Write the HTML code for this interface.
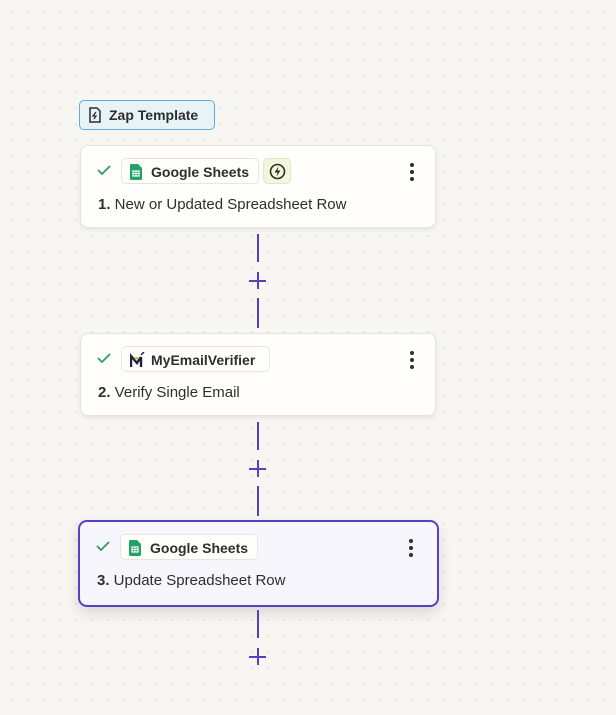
<!DOCTYPE html><html><head><style>
body{margin:0;width:616px;height:715px;overflow:hidden;background-color:#f7f6f2;background-image:radial-gradient(circle,#e2e0d9 0.9px,transparent 1.1px);background-size:16px 16px;background-position:4px 4px;font-family:"Liberation Sans",sans-serif;position:relative;color:#2d2e2e}
.badge{position:absolute;left:79px;top:100px;width:134px;height:28px;border:1px solid #5eaedc;border-radius:5px;background:#e8f3f8;font-weight:bold;font-size:14px;line-height:28px;color:#2d2e2e}
.badge span{position:absolute;left:29px}
.card{position:absolute;left:80px;width:356px;height:83px;background:#fffefb;border:1px solid #e6e4dc;border-radius:8px;box-shadow:0 2px 5px rgba(0,0,0,.08);box-sizing:border-box}
.card.sel{left:78px;width:361px;height:87px;border:2px solid #5b3fc2;background:#f6f6fc;box-shadow:0 6px 14px rgba(0,0,0,.12);border-radius:9px}
.chk{position:absolute;left:16px;top:18px}
.pill{position:absolute;left:40px;top:12px;height:26px;border:1px solid #e7e5dd;border-radius:5px;background:#fffefb;font-size:14px;font-weight:bold;line-height:26px;padding:0 7px 0 29px;color:#2d2e2e;box-sizing:border-box}
.pill svg{position:absolute;left:8px;top:5px}
.title{position:absolute;left:17px;top:50px;font-size:15px;color:#2d2e2e}
.title b{font-weight:bold}
.keb{position:absolute;left:329px;top:17px;width:4px}
.keb i{display:block;width:4px;height:4px;border-radius:2px;background:#2d2e2e;margin-bottom:3px}
.ln{position:absolute;left:257px;width:2px;background:#5b3fc2}
.plus{position:absolute;left:249px;width:18px;height:18px}
.plus:before{content:"";position:absolute;left:0;top:8px;width:17px;height:2px;background:#5b3fc2}
.plus:after{content:"";position:absolute;left:7.5px;top:0;width:2px;height:17px;background:#5b3fc2}
</style></head><body>
<div class="badge"><svg style="position:absolute;left:8px;top:6px" width="14" height="16" viewBox="0 0 14 16" fill="none" stroke="#2d2e2e" stroke-width="1.5"><path d="M2 1h7l3 3v11H2z"/><path d="M8 5l-3 4h3l-2 3" stroke-width="1.3"/></svg><span>Zap Template</span></div>

<div class="card" style="top:145px">
<svg class="chk" width="14" height="12" viewBox="0 0 14 12"><path d="M1 6l4 4 8-8" fill="none" stroke="#2f9e5a" stroke-width="1.8"/></svg>
<div class="pill" style="width:138px"><svg width="12" height="16" viewBox="0 0 12 16"><path d="M0 1.5A1.5 1.5 0 0 1 1.5 0H8l4 4v10.5A1.5 1.5 0 0 1 10.5 16h-9A1.5 1.5 0 0 1 0 14.5z" fill="#21a366"/><rect x="3" y="7" width="6" height="5" fill="none" stroke="#fff" stroke-width="1.2"/><path d="M3 9.5h6M6 7v5" stroke="#fff" stroke-width="1"/></svg>Google Sheets</div>
<div style="position:absolute;left:182px;top:12px;width:28px;height:26px;border:1px solid #e0e8c4;border-radius:5px;background:#f1f8dc;box-sizing:border-box"><svg style="position:absolute;left:5px;top:4px" width="17" height="17" viewBox="0 0 17 17"><circle cx="8.5" cy="8.5" r="7" fill="none" stroke="#2d2e2e" stroke-width="1.6"/><path d="M9.5 3.5L5.5 9.5h3l-1 4 4-6h-3z" fill="#2d2e2e"/></svg></div>
<div class="title"><b>1.</b> New or Updated Spreadsheet Row</div>
<div class="keb"><i></i><i></i><i></i></div></div>

<div class="ln" style="top:234px;height:28px"></div><div class="plus" style="top:272px"></div><div class="ln" style="top:298px;height:30px"></div>

<div class="card" style="top:333px">
<svg class="chk" width="14" height="12" viewBox="0 0 14 12"><path d="M1 6l4 4 8-8" fill="none" stroke="#2f9e5a" stroke-width="1.8"/></svg>
<div class="pill" style="width:149px"><svg width="16" height="16" viewBox="0 0 16 16"><path d="M1 15V4l6 7 4-6" fill="none" stroke="#1b2340" stroke-width="2.4"/><path d="M11 15V5" stroke="#1b2340" stroke-width="2.4"/><path d="M4 5h5l-2 3z" fill="#f4b400"/><path d="M11 3l3-3" stroke="#1b2340" stroke-width="1.5"/></svg>MyEmailVerifier</div>
<div class="title"><b>2.</b> Verify Single Email</div>
<div class="keb"><i></i><i></i><i></i></div></div>

<div class="ln" style="top:422px;height:28px"></div><div class="plus" style="top:460px"></div><div class="ln" style="top:486px;height:30px"></div>

<div class="card sel" style="top:520px">
<svg class="chk" width="14" height="12" viewBox="0 0 14 12"><path d="M1 6l4 4 8-8" fill="none" stroke="#2f9e5a" stroke-width="1.8"/></svg>
<div class="pill" style="width:138px"><svg width="12" height="16" viewBox="0 0 12 16"><path d="M0 1.5A1.5 1.5 0 0 1 1.5 0H8l4 4v10.5A1.5 1.5 0 0 1 10.5 16h-9A1.5 1.5 0 0 1 0 14.5z" fill="#21a366"/><rect x="3" y="7" width="6" height="5" fill="none" stroke="#fff" stroke-width="1.2"/><path d="M3 9.5h6M6 7v5" stroke="#fff" stroke-width="1"/></svg>Google Sheets</div>
<div class="title"><b>3.</b> Update Spreadsheet Row</div>
<div class="keb"><i></i><i></i><i></i></div></div>

<div class="ln" style="top:610px;height:28px"></div><div class="plus" style="top:648px"></div>
</body></html>
